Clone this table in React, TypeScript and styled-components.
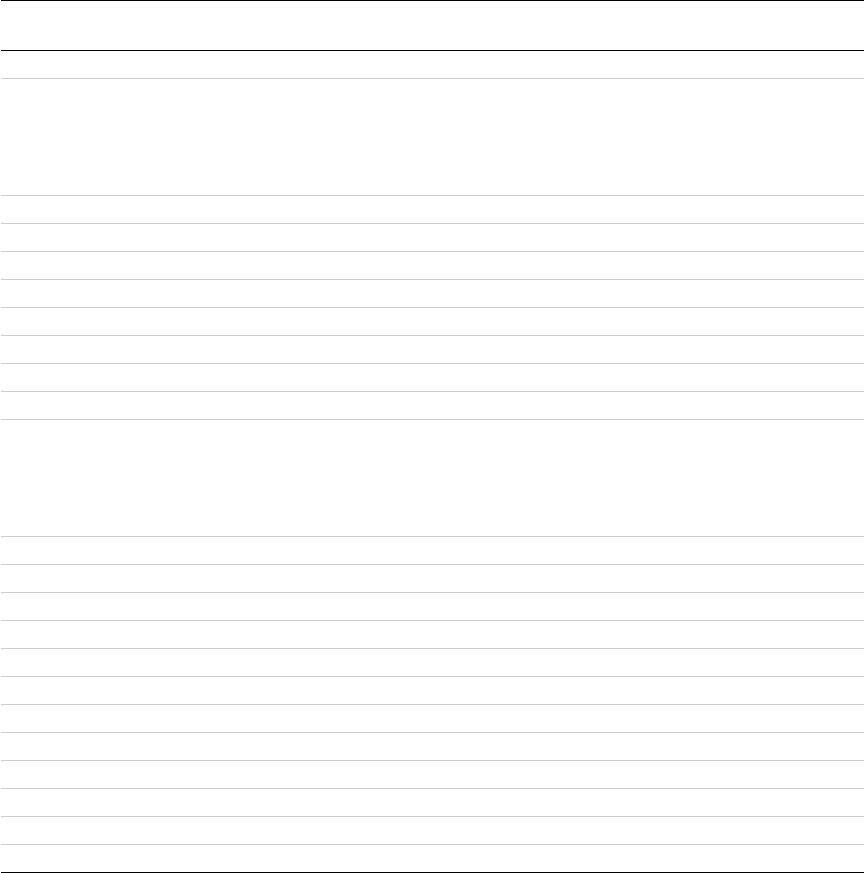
import React from "react";
import styled, { createGlobalStyle } from "styled-components";

const GlobalStyle = createGlobalStyle`
  html, body {
    margin: 0;
    padding: 0;
    background: #ffffff;
    font-family: "Liberation Sans", Arial, sans-serif;
  }
`;

const Table = styled.div`
  display: flex;
  flex-direction: column;
  margin: 0 1px;
  border-top: 1px solid #000000;
  border-bottom: 1px solid #000000;
  color: #ffffff;
  font-size: 14px;
`;

const HeaderRow = styled.div`
  height: 49px;
  border-bottom: 1px solid #000000;
  display: flex;
  align-items: flex-end;
`;

const Row = styled.div<{ $tall?: boolean; $last?: boolean }>`
  height: ${(p) => (p.$tall ? 116 : 27)}px;
  border-bottom: ${(p) => (p.$last ? "none" : "1px solid #cccccc")};
  display: flex;
  align-items: center;
`;

type RowSpec = { tall?: boolean };

const rows: RowSpec[] = [
  {},
  { tall: true },
  {}, {}, {}, {}, {}, {}, {}, {},
  { tall: true },
  {}, {}, {}, {}, {}, {}, {}, {}, {}, {}, {},
  {},
];

export default function App() {
  return (
    <>
      <GlobalStyle />
      <Table>
        <HeaderRow />
        {rows.map((r, i) => (
          <Row key={i} $tall={r.tall} $last={i === rows.length - 1} />
        ))}
      </Table>
    </>
  );
}
